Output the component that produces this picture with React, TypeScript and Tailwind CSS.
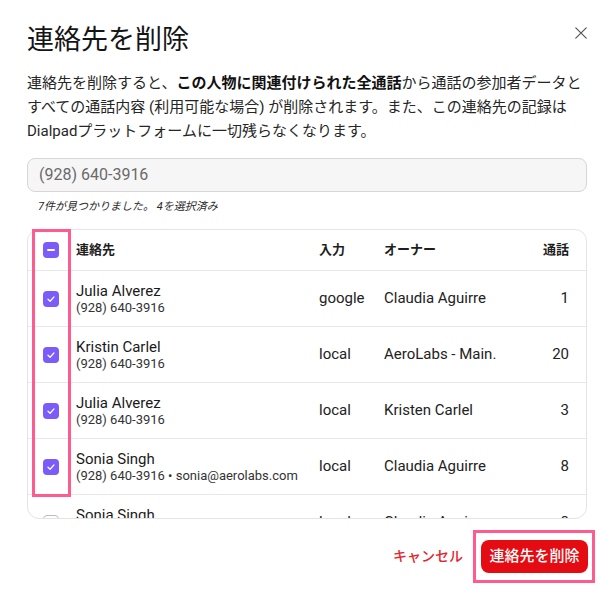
import React from 'react';

type Contact = {
    name: string;
    detail: string;
    source: string;
    owner: string;
    calls: number;
    checked: boolean;
};

const contacts: Contact[] = [
    { name: 'Julia Alverez', detail: '(928) 640-3916', source: 'google', owner: 'Claudia Aguirre', calls: 1, checked: true },
    { name: 'Kristin Carlel', detail: '(928) 640-3916', source: 'local', owner: 'AeroLabs - Main.', calls: 20, checked: true },
    { name: 'Julia Alverez', detail: '(928) 640-3916', source: 'local', owner: 'Kristen Carlel', calls: 3, checked: true },
    { name: 'Sonia Singh', detail: '(928) 640-3916 • sonia@aerolabs.com', source: 'local', owner: 'Claudia Aguirre', calls: 8, checked: true },
    { name: 'Sonia Singh', detail: '(928) 640-3916', source: 'local', owner: 'Claudia Aguirre', calls: 8, checked: false },
];

function Checkbox({ state }: { state: 'checked' | 'mixed' | 'empty' }) {
    if (state === 'empty') {
        return <span className="block w-4 h-4 rounded-[4px] border border-[#bdbdbd] bg-white" />;
    }
    return (
        <span className="flex w-4 h-4 items-center justify-center rounded-[4px] bg-[#7b5cfa]">
            {state === 'mixed' ? (
                <span className="block w-[8px] h-[2px] rounded-full bg-white" />
            ) : (
                <svg width="10" height="10" viewBox="0 0 10 10" fill="none">
                    <path d="M2 5.2 4.1 7.2 8 2.9" stroke="white" strokeWidth="1.3" strokeLinecap="round" strokeLinejoin="round" />
                </svg>
            )}
        </span>
    );
}

export default function App() {
    return (
        <div
            className="w-[615px] h-[601px] bg-white pt-[22px] pl-[27px] pr-[28px] text-[#1c1c1c]"
            style={{ fontFamily: 'Roboto, "Noto Sans CJK JP", sans-serif' }}
        >
            {/* Header */}
            <div className="flex items-start justify-between">
                <h1 className="text-[27px] leading-[36px] font-normal text-[#151515]">連絡先を削除</h1>
                <button className="mt-[5px] text-[#555]">
                    <svg width="12" height="12" viewBox="0 0 12 12" fill="none">
                        <path d="M0.8 0.8 11.2 11.2M11.2 0.8 0.8 11.2" stroke="currentColor" strokeWidth="1.2" strokeLinecap="round" />
                    </svg>
                </button>
            </div>

            <p className="mt-[13px] text-[15px] leading-[24px] text-[#262626]">
                連絡先を削除すると、<strong className="font-bold text-[#111]">この人物に関連付けられた全通話</strong>から通話の参加者データとすべての通話内容 (利用可能な場合) が削除されます。また、この連絡先の記録はDialpadプラットフォームに一切残らなくなります。
            </p>

            {/* Search */}
            <div className="mt-[15px] h-[34px] flex items-center rounded-[8px] border border-[#d6d6d6] bg-[#f6f6f6] px-[11px] text-[16px] text-[#6a6a6a]">
                (928) 640-3916
            </div>
            <p className="mt-[7px] pl-[11px] text-[11px] leading-[16px] italic text-[#2a2a2a]">
                7件が見つかりました。 4を選択済み
            </p>

            {/* Contacts table */}
            <div className="relative mt-[14px]">
                <div className="h-[290px] overflow-hidden rounded-[12px] border border-[#e4e4e4]">
                    <div className="flex h-[41px] items-center border-b border-[#e8e8e8] text-[13px] font-bold text-[#1e1e1e]">
                        <div className="w-[48px] pl-[15px]">
                            <Checkbox state="mixed" />
                        </div>
                        <div className="w-[243px]">連絡先</div>
                        <div className="w-[65px]">入力</div>
                        <div className="flex-1">オーナー</div>
                        <div className="pr-[17px] text-right">通話</div>
                    </div>
                    {contacts.map((c, i) => (
                        <div key={i} className="flex h-[56px] shrink-0 items-center border-b border-[#e8e8e8] text-[15px]">
                            <div className="w-[48px] pl-[15px]">
                                <Checkbox state={c.checked ? 'checked' : 'empty'} />
                            </div>
                            <div className="w-[243px]">
                                <div className="leading-[18px] text-[#1a1a1a]">{c.name}</div>
                                <div className="text-[13px] leading-[16px] text-[#333]">{c.detail}</div>
                            </div>
                            <div className="w-[65px] text-[#222]">{c.source}</div>
                            <div className="flex-1 text-[#222]">{c.owner}</div>
                            <div className="pr-[17px] text-right text-[#222]">{c.calls}</div>
                        </div>
                    ))}
                </div>
                {/* highlight around the selection column */}
                <div className="pointer-events-none absolute left-[5px] top-0 h-[268px] w-[39px] border-[3px] border-[#ff5b8e]" />
            </div>

            {/* Footer */}
            <div className="mt-[11px] flex items-center justify-end">
                <button className="text-[14px] font-medium text-[#e4262c]">キャンセル</button>
                <div className="ml-[10px] -mr-[8px] border-[3px] border-[#ff5b8e] pt-[7px] pb-[7px] pl-[5px] pr-[4px]">
                    <button className="h-[33px] w-[107px] rounded-[8px] bg-[#e50b12] text-[15px] font-medium text-white">
                        連絡先を削除
                    </button>
                </div>
            </div>
        </div>
    );
}
